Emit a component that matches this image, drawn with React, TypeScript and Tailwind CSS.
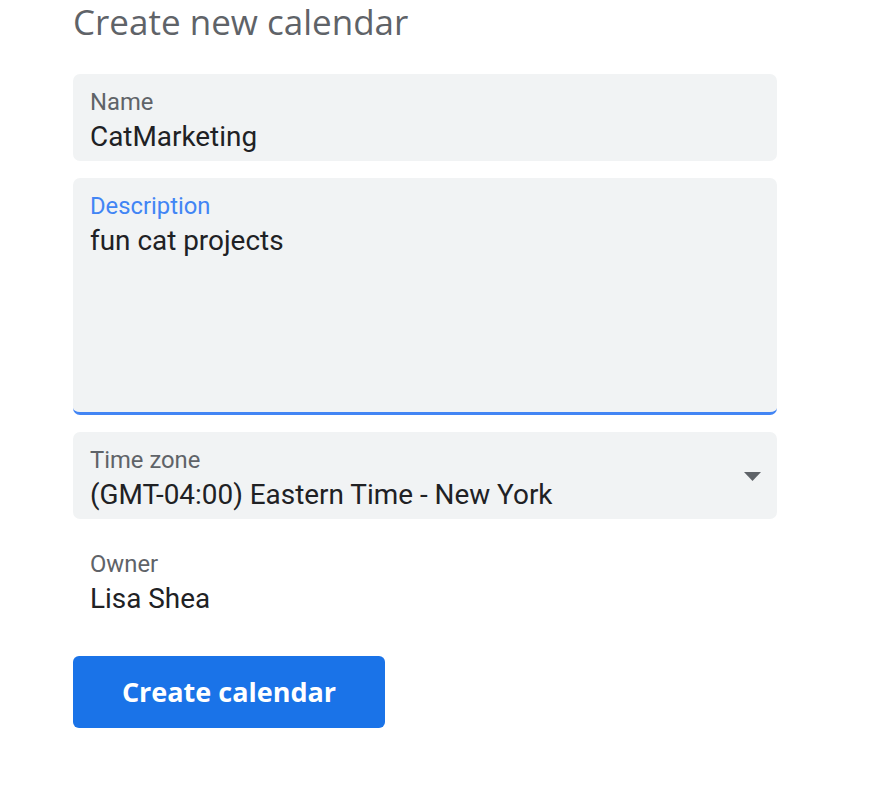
import React from "react";

const roboto = { fontFamily: "Roboto, 'Liberation Sans', sans-serif" };

function Field({ label, value, focused, tall, arrow }: { label: string; value: string; focused?: boolean; tall?: boolean; arrow?: boolean }) {
  return (
    <div
      className={`relative rounded-t-[7px] rounded-b-[7px] bg-[#f1f3f4] px-[17px] ${tall ? "h-[237px] border-b-[3px] border-[#4285f4] rounded-b-[3px]" : "h-[87px]"} pt-[13px]`}
    >
      <div className={`text-[23.8px] leading-[30px] ${focused ? "text-[#4285f4]" : "text-[#5f6368]"}`}>{label}</div>
      <div className="mt-[3px] text-[27.9px] leading-[34px] text-[#202124]">{value}</div>
      {arrow && (
        <svg className="absolute right-[16px] top-[40px]" width="17" height="9" viewBox="0 0 17 9">
          <polygon points="0,0 17,0 8.5,9" fill="#5f6368" />
        </svg>
      )}
    </div>
  );
}

export default function App() {
  return (
    <div className="h-[807px] w-[869px] bg-white" style={roboto}>
      <div className="ml-[73px] w-[704px] flex flex-col">
        <h1 className="text-[35px] leading-[44px] text-[#5f6368] mt-[0px]" style={{ fontFamily: "'Open Sans', Lato, sans-serif" }}>
          Create new calendar
        </h1>
        <div className="mt-[30px] flex flex-col gap-[17px]">
          <Field label="Name" value="CatMarketing" />
          <Field label="Description" value="fun cat projects" focused tall />
          <Field label="Time zone" value="(GMT-04:00) Eastern Time - New York" arrow />
        </div>
        <div className="mt-[30px] px-[17px]">
          <div className="text-[23.8px] leading-[30px] text-[#5f6368]">Owner</div>
          <div className="mt-[3px] text-[27.9px] leading-[34px] text-[#202124]">Lisa Shea</div>
        </div>
        <button
          className="mt-[40px] h-[72px] w-[312px] rounded-[6px] bg-[#1a73e8] text-white text-[27px] font-bold"
          style={{ fontFamily: "'Open Sans', Lato, sans-serif" }}
        >
          Create calendar
        </button>
      </div>
    </div>
  );
}
